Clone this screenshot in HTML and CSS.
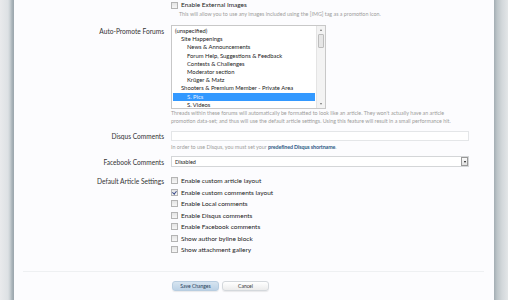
FILE: index.html
```html
<!DOCTYPE html>
<html lang="en">
<head>
    <meta charset="UTF-8">
    <title>Options</title>
    <link rel="stylesheet" href="styles.css">
</head>
<body>
    <div class="page">
        <div class="gutter gutter-left"></div>

        <div class="content">
            <div class="form-row">
                <div class="row-label"></div>
                <div class="row-field">
                    <label class="check"><span class="box"></span>Enable External Images</label>
                    <p class="hint hint-indent">This will allow you to use any images included using the [IMG] tag as a promotion icon.</p>
                </div>
            </div>

            <div class="form-row row-forums">
                <div class="row-label">Auto-Promote Forums</div>
                <div class="row-field">
                    <div class="listbox">
                        <ul class="options">
                            <li>(unspecified)</li>
                            <li class="depth1">Site Happenings</li>
                            <li class="depth2">News &amp; Announcements</li>
                            <li class="depth2">Forum Help, Suggestions &amp; Feedback</li>
                            <li class="depth2">Contests &amp; Challenges</li>
                            <li class="depth2">Moderator section</li>
                            <li class="depth2">Krüger &amp; Matz</li>
                            <li class="depth1">Shooters &amp; Premium Member - Private Area</li>
                            <li class="depth2 selected">S. Pics</li>
                            <li class="depth2">S. Videos</li>
                        </ul>
                        <div class="scrollbar">
                            <span class="arrow arrow-up"></span>
                            <span class="thumb"></span>
                            <span class="arrow arrow-down"></span>
                        </div>
                    </div>
                    <p class="hint">Threads within these forums will automatically be formatted to look like an article. They won't actually have an article promotion data-set; and thus will use the default article settings. Using this feature will result in a small performance hit.</p>
                </div>
            </div>

            <div class="form-row row-disqus">
                <div class="row-label">Disqus Comments</div>
                <div class="row-field">
                    <div class="textbox"></div>
                    <p class="hint">In order to use Disqus, you must set your <a href="#">predefined Disqus shortname</a>.</p>
                </div>
            </div>

            <div class="form-row row-facebook">
                <div class="row-label">Facebook Comments</div>
                <div class="row-field">
                    <div class="select">
                        <span>Disabled</span>
                        <span class="select-btn"></span>
                    </div>
                </div>
            </div>

            <div class="form-row row-defaults">
                <div class="row-label">Default Article Settings</div>
                <div class="row-field">
                    <ul class="check-list">
                        <li><label class="check"><span class="box"></span>Enable custom article layout</label></li>
                        <li><label class="check"><span class="box checked"></span>Enable custom comments layout</label></li>
                        <li><label class="check"><span class="box"></span>Enable Local comments</label></li>
                        <li><label class="check"><span class="box"></span>Enable Disqus comments</label></li>
                        <li><label class="check"><span class="box"></span>Enable Facebook comments</label></li>
                        <li><label class="check"><span class="box"></span>Show author byline block</label></li>
                        <li><label class="check"><span class="box"></span>Show attachment gallery</label></li>
                    </ul>
                </div>
            </div>

            <div class="submit-unit">
                <button class="button primary">Save Changes</button>
                <button class="button">Cancel</button>
            </div>
        </div>

        <div class="gutter gutter-right"></div>
    </div>
</body>
</html>
```

FILE: styles.css
```css
/* Page frame */
body {
    margin: 0;
    font-family: Lato, "Open Sans", sans-serif;
    color: #222;
    background: #fcfcfe;
}

.page {
    display: flex;
    height: 300px;
    overflow: hidden;
}

.gutter {
    width: 14px;
    flex-shrink: 0;
}

.gutter-left {
    background: linear-gradient(to right, #e9eaec 0, #dde1e4 8px, #c9d0d4 10px, #a9b3b9 12px, #9aa5ac 14px);
}

.gutter-right {
    background: linear-gradient(to right, #a3adb3 0, #bcc4c8 3px, #d3d8db 8px, #e3e6e8 14px);
}

.content {
    flex: 1;
    background: #fcfcfe;
    padding-top: 1px;
}

/* Form rows */
.form-row {
    display: flex;
    gap: 7px;
}

.row-label {
    width: 150px;
    flex-shrink: 0;
    text-align: right;
    font-size: 6.6px;
    line-height: 8px;
    color: #333;
}

.row-field {
    width: 298px;
}

.hint {
    margin: 0;
    font-size: 5.35px;
    line-height: 8px;
    color: #9c9c9c;
}

.hint-indent {
    padding-left: 8px;
    line-height: 7px;
    margin-top: 2px;
}

.hint a {
    color: #2d5a86;
    font-weight: bold;
    letter-spacing: -0.1px;
    text-decoration: none;
}

/* Checkboxes */
.check {
    display: flex;
    align-items: center;
    gap: 3px;
    font-size: 6.5px;
    line-height: 8px;
    color: #222;
}

.box {
    width: 5px;
    height: 5px;
    border: 1px solid #b4b4b4;
    background: linear-gradient(#e4e4e4, #f6f6f6);
    position: relative;
}

.box.checked::after {
    content: "";
    position: absolute;
    left: 1px;
    top: 0;
    width: 1.5px;
    height: 3px;
    border: solid #3a4a8a;
    border-width: 0 1px 1px 0;
    transform: rotate(40deg);
}

/* Forum list box */
.row-forums {
    margin-top: 7px;
}

.row-forums .row-label {
    padding-top: 2px;
}

.listbox {
    display: flex;
    width: 155px;
    height: 84px;
    box-sizing: border-box;
    border: 1px solid #c8c8c8;
    background: #fff;
}

.options {
    flex: 1;
    list-style: none;
    margin: 0;
    padding: 1px;
    font-size: 5.85px;
    line-height: 8.2px;
    color: #222;
}

.options li {
    padding-left: 2px;
    white-space: nowrap;
}

.options .depth1 {
    padding-left: 8px;
}

.options .depth2 {
    padding-left: 14px;
}

.options .selected {
    background: #3399ff;
    color: #e8f2ff;
}

.scrollbar {
    width: 8px;
    display: flex;
    flex-direction: column;
    align-items: center;
    border-left: 1px solid #e4e4e4;
    background: #f3f3f3;
}

.arrow {
    width: 0;
    height: 0;
    border-left: 1.5px solid transparent;
    border-right: 1.5px solid transparent;
    margin: 3px 0;
}

.arrow-up {
    border-bottom: 2px solid #777;
}

.arrow-down {
    border-top: 2px solid #777;
    margin-top: auto;
}

.thumb {
    width: 4px;
    height: 12px;
    border: 1px solid #bdbdbd;
    background: #e6e6e6;
    border-radius: 1px;
}

/* Disqus text box */
.row-disqus {
    margin-top: 6px;
    align-items: flex-start;
}

.row-disqus .row-label {
    padding-top: 1px;
}

.textbox {
    height: 10px;
    border: 1px solid #e4e6e8;
    background: #fff;
    box-sizing: border-box;
}

.row-disqus .hint {
    margin-top: 2px;
}

/* Facebook select */
.row-facebook {
    margin-top: 5px;
    align-items: center;
}

.select {
    display: flex;
    align-items: center;
    justify-content: space-between;
    height: 11px;
    box-sizing: border-box;
    border: 1px solid #d4d6d8;
    background: #fff;
    padding: 0 0 0 3px;
    font-size: 5.5px;
    color: #222;
}

.select-btn {
    width: 7px;
    height: 9px;
    box-sizing: border-box;
    border: 1px solid #999;
    background: linear-gradient(#fafafa, #e0e0e0);
    position: relative;
}

.select-btn::after {
    content: "";
    position: absolute;
    left: 1.5px;
    top: 3px;
    border-left: 1.5px solid transparent;
    border-right: 1.5px solid transparent;
    border-top: 2px solid #111;
}

/* Default settings checkboxes */
.row-defaults {
    margin-top: 8px;
}

.row-defaults .row-label {
    padding-top: 2px;
}

.check-list {
    list-style: none;
    margin: 0;
    padding: 0;
}

.check-list .check {
    line-height: 11.5px;
}

/* Buttons */
.submit-unit {
    margin: 15px 10px 0 9px;
    padding: 9px 0 0 149px;
    border-top: 1px solid #eef0f2;
    display: flex;
    gap: 3px;
}

.button {
    width: 47px;
    height: 10px;
    padding: 0;
    border: 1px solid #d4d8dc;
    border-radius: 3px;
    background: linear-gradient(#ffffff, #ececec);
    font-family: Lato, "Open Sans", sans-serif;
    font-size: 5px;
    color: #333;
    box-shadow: 0 1px 1px rgba(0, 0, 0, 0.08);
}

.button.primary {
    border-color: #b8cde0;
    background: linear-gradient(#d6e4f0, #bcd2e6);
    color: #1f3a56;
}
```
